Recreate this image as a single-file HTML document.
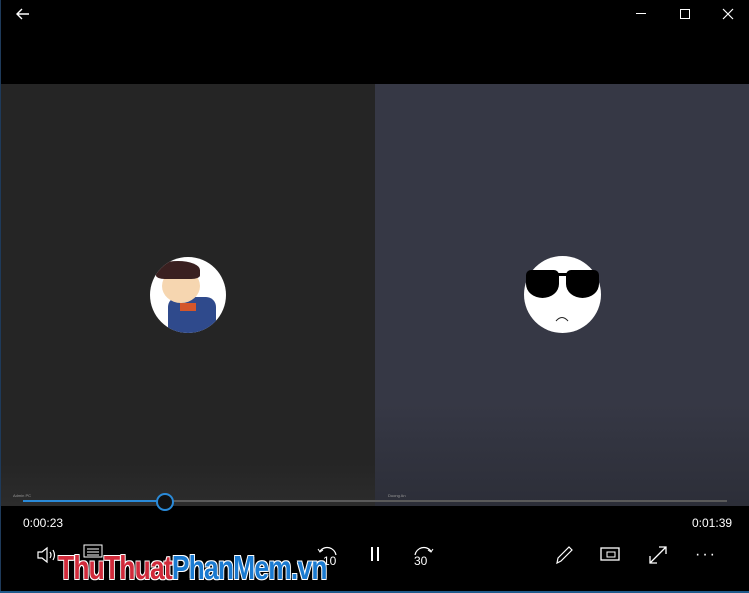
<!DOCTYPE html>
<html><head><style>
*{margin:0;padding:0;box-sizing:border-box}
body{width:749px;height:593px;background:#000;position:relative;overflow:hidden;font-family:"Liberation Sans",sans-serif;color:#fff}
.a{position:absolute}
</style></head><body>
<div class="a" style="left:0;top:0;width:1px;height:593px;background:#1e3a5a"></div>
<div class="a" style="left:0;top:591px;width:749px;height:2px;background:#1f5a8a"></div>
<svg class="a" style="left:15px;top:6px" width="16" height="16"><path d="M14 8H2M7 3L2 8l5 5" stroke="#fff" stroke-width="1.4" fill="none"/></svg>
<div class="a" style="left:636px;top:13px;width:10px;height:1px;background:#fff"></div>
<div class="a" style="left:680px;top:9px;width:10px;height:10px;border:1px solid #fff"></div>
<svg class="a" style="left:722px;top:8px" width="12" height="12"><path d="M1 1L11 11M11 1L1 11" stroke="#fff" stroke-width="1.2"/></svg>
<div class="a" style="left:1px;top:84px;width:374px;height:422px;background:linear-gradient(#252525 0,#252525 380px,#2c2c2c 422px)"></div>
<div class="a" style="left:375px;top:84px;width:374px;height:422px;background:linear-gradient(#363845 0,#363845 320px,#2c2e38 422px)"></div>
<div class="a" style="left:150px;top:257px;width:76px;height:76px;border-radius:50%;background:#fff;overflow:hidden">
<div class="a" style="left:18px;top:40px;width:48px;height:40px;background:#2f4a8c;border-radius:10px 10px 0 0"></div>
<div class="a" style="left:12px;top:12px;width:38px;height:34px;background:#f6d6b0;border-radius:50%"></div>
<div class="a" style="left:6px;top:4px;width:44px;height:18px;background:#3a2020;border-radius:50% 50% 20% 20%"></div>
<div class="a" style="left:30px;top:46px;width:16px;height:8px;background:#d4562a"></div>
</div>
<div class="a" style="left:524px;top:256px;width:77px;height:77px;border-radius:50%;background:#fff"></div>
<div class="a" style="left:526px;top:270px;width:33px;height:28px;background:#000;border-radius:5px 5px 50% 50%"></div>
<div class="a" style="left:566px;top:270px;width:33px;height:28px;background:#000;border-radius:5px 5px 50% 50%"></div>
<div class="a" style="left:556px;top:273px;width:12px;height:3px;background:#000"></div>
<svg class="a" style="left:555px;top:314px" width="14" height="8"><path d="M1 7Q7 0 13 7" stroke="#222" fill="none"/></svg>
<div class="a" style="left:13px;top:493px;font-size:4px;color:#999">Admin PC</div>
<div class="a" style="left:388px;top:493px;font-size:4px;color:#999">Duong An</div>
<div class="a" style="left:23px;top:500px;width:704px;height:2px;background:#5a5a5a"></div>
<div class="a" style="left:23px;top:500px;width:142px;height:2px;background:#2a8ad8"></div>
<div class="a" style="left:156px;top:493px;width:18px;height:18px;border-radius:50%;border:2px solid #2a8ad8;background:#111"></div>
<div class="a" style="left:23px;top:516px;font-size:12px">0:00:23</div>
<div class="a" style="left:692px;top:516px;font-size:12px">0:01:39</div>
<svg class="a" style="left:36px;top:545px" width="22" height="20"><path d="M2 7h4l5-4v14l-5-4H2z" stroke="#fff" fill="none" stroke-width="1.2"/><path d="M14 7q2 3 0 6M17 5q3 5 0 10" stroke="#fff" fill="none" stroke-width="1.2"/></svg>
<svg class="a" style="left:83px;top:544px" width="22" height="18"><rect x="1" y="1" width="18" height="12" stroke="#fff" fill="none"/><path d="M4 5h12M4 8h12M4 11h12" stroke="#fff"/></svg>
<svg class="a" style="left:316px;top:543px" width="24" height="24"><path d="M4 8a9 9 0 0 1 16 4" stroke="#fff" fill="none" stroke-width="1.2"/><path d="M2 6l2 3 3-2" stroke="#fff" fill="none"/><text x="7" y="22" font-size="12" fill="#fff" font-family="Liberation Sans">10</text></svg>
<div class="a" style="left:371px;top:547px;width:2px;height:14px;background:#fff"></div>
<div class="a" style="left:377px;top:547px;width:2px;height:14px;background:#fff"></div>
<svg class="a" style="left:411px;top:543px" width="24" height="24"><path d="M20 8a9 9 0 0 0-16 4" stroke="#fff" fill="none" stroke-width="1.2"/><path d="M22 6l-2 3-3-2" stroke="#fff" fill="none"/><text x="3" y="22" font-size="12" fill="#fff" font-family="Liberation Sans">30</text></svg>
<svg class="a" style="left:553px;top:544px" width="22" height="22"><path d="M4 19l1-5L16 3l3 3L8 17z" stroke="#fff" fill="none" stroke-width="1.2"/></svg>
<svg class="a" style="left:600px;top:547px" width="22" height="16"><rect x="1" y="1" width="18" height="12" stroke="#fff" fill="none" stroke-width="1.3"/><rect x="7" y="5" width="8" height="5" stroke="#fff" fill="none"/></svg>
<svg class="a" style="left:647px;top:544px" width="22" height="22"><path d="M3 19L19 3M12 3h7v7M3 12v7h7" stroke="#fff" fill="none" stroke-width="1.3"/></svg>
<div class="a" style="left:695px;top:546px;font-size:16px;letter-spacing:2px">···</div>
<div class="a" style="left:58px;top:549px;font-size:33px;font-weight:bold;letter-spacing:-1px;transform:scaleX(0.8);transform-origin:left;text-shadow:1px 1px 0 #fff,-1px -1px 0 #fff,1px -1px 0 #fff,-1px 1px 0 #fff;white-space:nowrap"><span style="color:#d02a3a">ThuThuat</span><span style="color:#1a7ad0">PhanMem.vn</span></div>
</body></html>
